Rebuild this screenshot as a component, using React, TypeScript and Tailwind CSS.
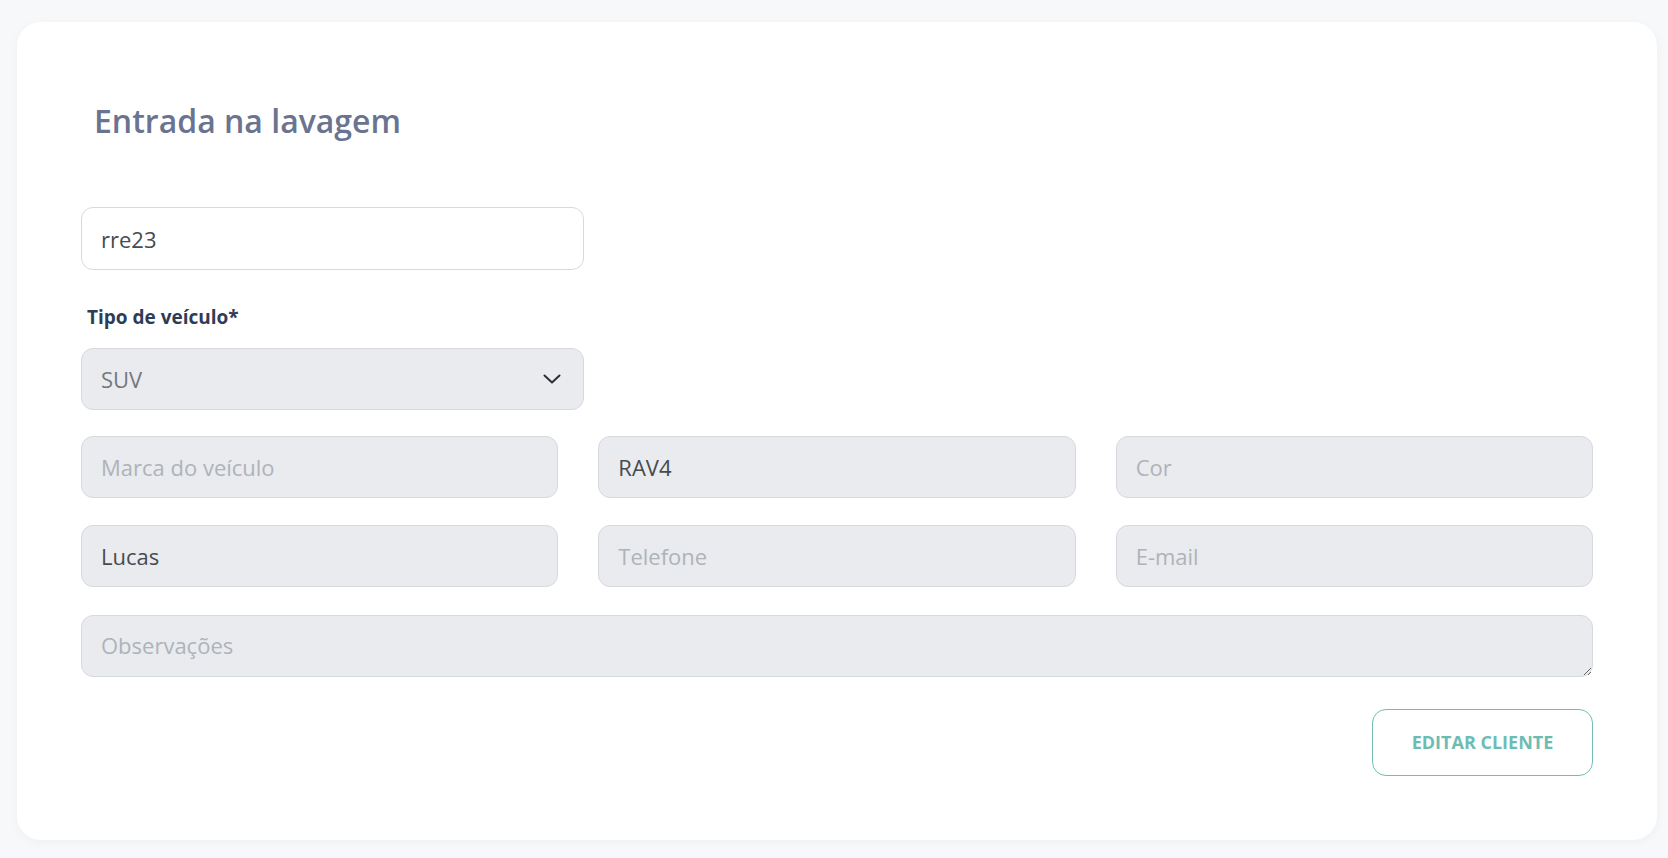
import React from "react";

const font = { fontFamily: "'Open Sans', 'Noto Sans', sans-serif" };

function Field({ placeholder, value }: { placeholder: string; value?: string }) {
  return (
    <input
      readOnly
      placeholder={placeholder}
      defaultValue={value}
      className="h-[62px] w-full rounded-[12px] border border-[#d6d9de] bg-[#e9ebef] px-[19px] text-[22px] text-[#474b50] placeholder:text-[#afb3b9] outline-none"
      style={font}
    />
  );
}

export default function App() {
  return (
    <div className="min-h-[858px] w-full bg-[#f7f8fa] pl-[17px] pt-[22px]" style={font}>
      <div className="flex h-[818px] w-[1640px] flex-col rounded-[24px] bg-white px-16 pt-[79px] shadow-[0_2px_10px_rgba(0,0,0,0.04)]">
        <h1 className="pl-[13px] text-[32px] font-semibold leading-[40px] text-[#6a7490]">Entrada na lavagem</h1>

        <input
          readOnly
          defaultValue="rre23"
          className="mt-[66px] h-[63px] w-[503px] rounded-[12px] border border-[#d6d9de] bg-white px-[19px] text-[22px] text-[#474b50] outline-none"
          style={font}
        />

        <label className="mt-[35px] pl-[6px] text-[19px] font-bold leading-[25px] text-[#2f3c55]">Tipo de veículo*</label>

        <div className="mt-[18px] flex h-[62px] w-[503px] items-center justify-between rounded-[12px] border border-[#d6d9de] bg-[#e9ebef] pl-[19px] pr-[22px]">
          <span className="text-[22px] text-[#74787e]">SUV</span>
          <svg width="18" height="10" viewBox="0 0 18 10" fill="none">
            <path d="M1.5 1.5 L9 8.5 L16.5 1.5" stroke="#2c2f33" strokeWidth="2" strokeLinecap="round" strokeLinejoin="round" />
          </svg>
        </div>

        <div className="mt-[26px] grid grid-cols-3 gap-x-10">
          <Field placeholder="Marca do veículo" />
          <Field placeholder="Modelo" value="RAV4" />
          <Field placeholder="Cor" />
        </div>

        <div className="mt-[27px] grid grid-cols-3 gap-x-10">
          <Field placeholder="Nome" value="Lucas" />
          <Field placeholder="Telefone" />
          <Field placeholder="E-mail" />
        </div>

        <textarea
          readOnly
          placeholder="Observações"
          className="mt-[28px] block h-[62px] w-full rounded-[12px] border border-[#d6d9de] bg-[#e9ebef] px-[19px] pt-[14px] text-[22px] leading-[30px] text-[#474b50] placeholder:text-[#afb3b9] outline-none"
          style={font}
        />

        <div className="mt-[32px] flex justify-end">
          <button
            className="h-[67px] w-[221px] rounded-[14px] border border-[#72bdb6] bg-white text-[18px] font-bold uppercase text-[#6dbcb4]"
            style={font}
          >
            Editar cliente
          </button>
        </div>
      </div>
    </div>
  );
}
